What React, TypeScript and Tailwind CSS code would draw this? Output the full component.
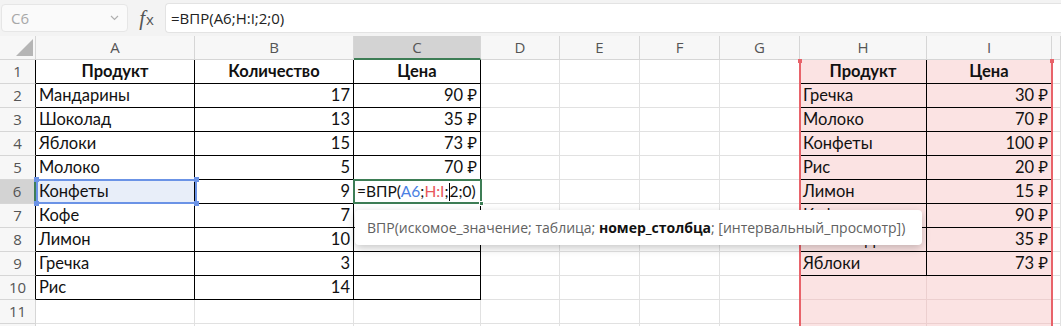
import React from "react";

const cols = ["A", "B", "C", "D", "E", "F", "G", "H", "I", ""];

// cell contents by row (1-based), col index
const cells: Record<string, { text: string; align?: "l" | "r" | "c"; bold?: boolean }> = {};
const put = (r: number, c: number, text: string, align: "l" | "r" | "c" = "l", bold = false) => {
  cells[`${r}-${c}`] = { text, align, bold };
};

const left = ["Мандарины", "Шоколад", "Яблоки", "Молоко", "Конфеты", "Кофе", "Лимон", "Гречка", "Рис"];
const qty = ["17", "13", "15", "5", "9", "7", "10", "3", "14"];
const price = ["90 ₽", "35 ₽", "73 ₽", "70 ₽"];
const lookup = [
  ["Гречка", "30 ₽"],
  ["Молоко", "70 ₽"],
  ["Конфеты", "100 ₽"],
  ["Рис", "20 ₽"],
  ["Лимон", "15 ₽"],
  ["Кофе", "90 ₽"],
  ["Шоколад", "35 ₽"],
  ["Яблоки", "73 ₽"],
];

put(1, 0, "Продукт", "c", true);
put(1, 1, "Количество", "c", true);
put(1, 2, "Цена", "c", true);
put(1, 7, "Продукт", "c", true);
put(1, 8, "Цена", "c", true);
left.forEach((t, i) => put(i + 2, 0, t));
qty.forEach((t, i) => put(i + 2, 1, t, "r"));
price.forEach((t, i) => put(i + 2, 2, t, "r"));
lookup.forEach(([p, c], i) => {
  put(i + 2, 7, p);
  put(i + 2, 8, c, "r");
});

const rows = Array.from({ length: 12 }, (_, i) => i + 1);

function cellClass(r: number, c: number) {
  const inLeft = c <= 2 && r <= 10;
  const inRight = (c === 7 || c === 8) && r <= 9;
  const pink = c === 7 || c === 8;
  const right = inLeft || (c === 7 && r <= 9) ? "border-r-black" : pink ? "border-r-[#eccfcf]" : "border-r-[#e1e1e1]";
  const bottom = inLeft || inRight ? "border-b-black" : pink ? "border-b-[#eccfcf]" : "border-b-[#e1e1e1]";
  const bg = pink ? "bg-[#fbe3e3]" : r === 6 && c === 0 ? "bg-[#e8eef9]" : "bg-white";
  return `flex items-center overflow-hidden whitespace-nowrap border-r border-b px-[3px] ${right} ${bottom} ${bg}`;
}

function Cell({ r, c }: { r: number; c: number }) {
  if (r === 6 && c === 2) {
    return (
      <div className={`${cellClass(r, c)} overflow-visible text-[15.5px]`}>
        <span>=ВПР(</span>
        <span className="text-[#4b7fe3]">A6</span>
        <span>;</span>
        <span className="text-[#e8575c]">H:I</span>
        <span>;</span>
        <span className="inline-block h-[18px] w-px bg-black" />
        <span>2;0)</span>
      </div>
    );
  }
  const d = cells[`${r}-${c}`];
  const align = d?.align === "r" ? "justify-end" : d?.align === "c" ? "justify-center" : "justify-start";
  return (
    <div className={`${cellClass(r, c)} ${align} ${d?.bold ? "font-bold" : ""}`}>
      {d?.text}
    </div>
  );
}

export default function App() {
  return (
    <div className="relative h-[326px] w-[1061px] overflow-hidden bg-white text-[#111]">
      {/* formula bar */}
      <div className="flex h-[36px] items-center bg-[#f3f3f3] font-['Open_Sans',sans-serif]">
        <div className="ml-[1px] flex h-[28px] w-[127px] items-center justify-between rounded-[4px] border border-[#e6e6e6] bg-[#fafafa] pl-[9px] pr-[8px]">
          <span className="text-[15px] text-[#a8a8a8]">C6</span>
          <svg width="9" height="6" viewBox="0 0 9 6" className="text-[#b0b0b0]">
            <path d="M1 1l3.5 3.5L8 1" fill="none" stroke="currentColor" strokeWidth="1.2" />
          </svg>
        </div>
        <div className="flex w-[37px] items-center justify-center text-[#555]">
          <span className="font-['Liberation_Serif',serif] text-[21px] italic leading-none">f</span>
          <span className="ml-[1px] mt-[3px] text-[15px] leading-none">x</span>
        </div>
        <div className="flex h-[30px] flex-1 items-center rounded-l-[4px] border border-r-0 border-[#e3e3e3] bg-white pl-[5px] text-[15px] text-[#222]">
          =ВПР(A6;H:I;2;0)
        </div>
      </div>

      {/* sheet */}
      <div className="grid grid-cols-[36px_159px_159px_127px_79px_80px_80px_80px_127px_125px_1fr] auto-rows-[24px] font-['Lato','Noto_Sans',sans-serif] text-[16.5px]">
        <div className="flex items-end justify-end border-r border-b border-[#d6d6d6] bg-[#f7f7f7] pb-[3px] pr-[1px]">
          <svg width="18" height="17" viewBox="0 0 18 17">
            <path d="M17 0V17H0Z" fill="#b5b5b5" />
          </svg>
        </div>
        {cols.map((l, i) => (
          <div
            key={l + i}
            className={`flex items-center justify-center border-r border-[#d6d6d6] font-['Open_Sans',sans-serif] text-[15px] text-[#555] ${
              i === 2 ? "border-b-2 border-b-[#3d7d55] bg-[#d3d3d3] text-[#333]" : "border-b bg-[#f7f7f7]"
            }`}
          >
            {l}
          </div>
        ))}
        {rows.map((r) => (
          <React.Fragment key={r}>
            <div
              className={`flex items-center justify-center border-b font-['Open_Sans',sans-serif] text-[15px] text-[#555] ${
                r === 6
                  ? "border-r-2 border-r-[#3d7d55] border-b-[#d6d6d6] bg-[#d3d3d3] text-[#333]"
                  : r <= 10
                  ? "border-r border-r-black border-b-[#d6d6d6] bg-[#f7f7f7]"
                  : "border-r border-r-[#d6d6d6] border-b-[#d6d6d6] bg-[#f7f7f7]"
              }`}
            >
              {r}
            </div>
            {cols.map((_, c) => (
              <Cell key={c} r={r} c={c} />
            ))}
          </React.Fragment>
        ))}
      </div>

      {/* H:I reference highlight */}
      <div className="absolute bottom-0 left-[799px] top-[60px] w-[2px] bg-[#e8636a]" />
      <div className="absolute bottom-0 left-[1051px] top-[60px] w-[2px] bg-[#e8636a]" />
      <div className="absolute left-[798px] top-[59px] h-[4px] w-[4px] bg-[#e8636a]" />
      <div className="absolute left-[1050px] top-[59px] h-[4px] w-[4px] bg-[#e8636a]" />

      {/* A6 reference highlight */}
      <div className="absolute left-[36px] top-[179px] h-[25px] w-[161px] border-2 border-[#6b93e6]" />
      <div className="absolute left-[34px] top-[177px] h-[5px] w-[5px] bg-[#6b93e6]" />
      <div className="absolute left-[194px] top-[177px] h-[5px] w-[5px] bg-[#6b93e6]" />
      <div className="absolute left-[34px] top-[201px] h-[5px] w-[5px] bg-[#6b93e6]" />
      <div className="absolute left-[194px] top-[201px] h-[5px] w-[5px] bg-[#6b93e6]" />

      {/* active cell C6 */}
      <div className="absolute left-[353px] top-[179px] h-[25px] w-[129px] border-2 border-[#3d7d55]" />
      <div className="absolute left-[479px] top-[201px] h-[5px] w-[5px] border border-white bg-[#3d7d55]" />

      {/* function tooltip */}
      <div className="absolute left-[355px] top-[210px] flex h-[35px] w-[567px] items-center whitespace-pre rounded-[4px] bg-white pl-[12px] font-['Open_Sans',sans-serif] text-[14px] text-[#616161] shadow-[0_3px_8px_rgba(0,0,0,0.22)]">
        <span>ВПР(искомое_значение; таблица; </span>
        <b className="text-[#111]">номер_столбца</b>
        <span>; [интервальный_просмотр])</span>
      </div>
    </div>
  );
}
